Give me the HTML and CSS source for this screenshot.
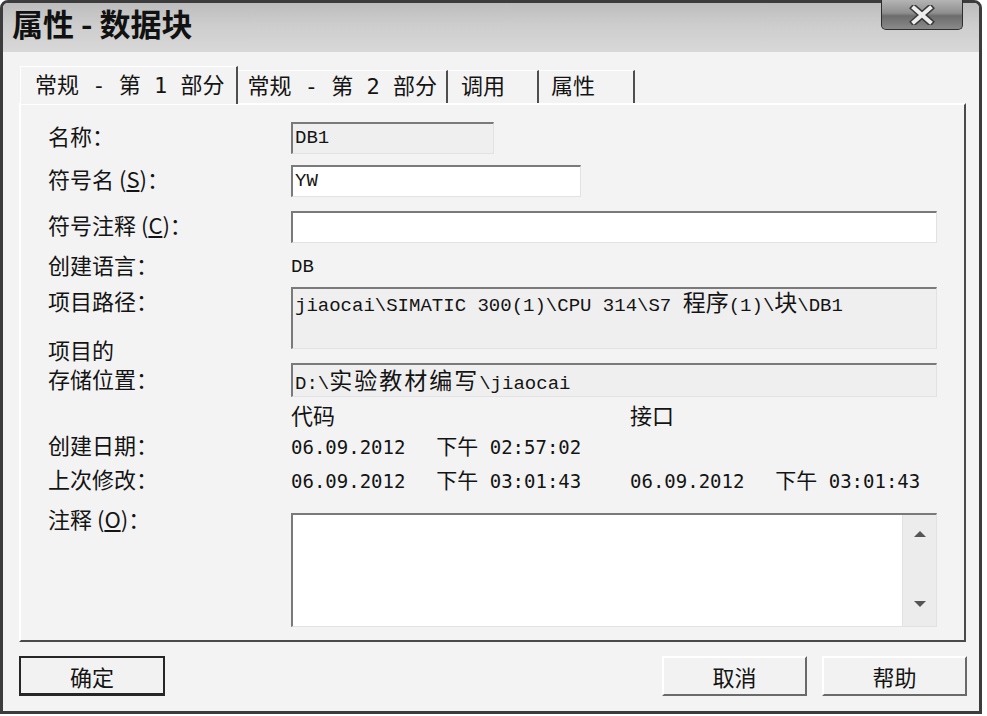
FILE: index.html
```html
<!DOCTYPE html>
<html lang="zh-CN">
<head>
  <meta charset="UTF-8">
  <title>属性 - 数据块</title>
  <link rel="stylesheet" href="styles.css">
</head>
<body>

<div class="window">
  <!-- 标题栏 -->
  <div class="titlebar">
    <span class="title">属性 - 数据块</span>
    <div class="close-btn">
      <svg width="26" height="20" viewBox="0 0 26 20">
        <path d="M5 3 L21 17 M21 3 L5 17" stroke="#3a3a3a" stroke-width="7" stroke-linecap="square" fill="none"/>
        <path d="M5 3 L21 17 M21 3 L5 17" stroke="#ededed" stroke-width="4" stroke-linecap="square" fill="none"/>
      </svg>
    </div>
  </div>

  <div class="client">
    <!-- 选项卡 -->
    <div class="tabs">
      <div class="tab active">常规 - 第 1 部分</div>
      <div class="tab">常规 - 第 2 部分</div>
      <div class="tab">调用</div>
      <div class="tab">属性</div>
    </div>

    <div class="panel">
      <div class="row">
        <span class="lbl">名称：</span>
        <div class="field readonly w-short">DB1</div>
      </div>
      <div class="row r-sym">
        <span class="lbl">符号名 (<u>S</u>)：</span>
        <div class="field w-mid">YW</div>
      </div>
      <div class="row r-comment">
        <span class="lbl">符号注释 (<u>C</u>)：</span>
        <div class="field w-full"></div>
      </div>
      <div class="row r-lang">
        <span class="lbl">创建语言：</span>
        <span class="mono">DB</span>
      </div>
      <div class="row r-path">
        <span class="lbl lbl-top">项目路径：</span>
        <div class="field readonly w-full tall">jiaocai\SIMATIC 300(1)\CPU 314\S7 <span class="cjk">程序</span>(1)\<span class="cjk">块</span>\DB1</div>
      </div>
      <div class="row r-store">
        <span class="lbl lbl-two">项目的<br>存储位置：</span>
        <div class="field readonly w-full">D:\<span class="cjk wide">实验教材编写</span>\jiaocai</div>
      </div>
      <div class="row r-head">
        <span class="lbl"></span>
        <span class="col">代码</span>
        <span class="col">接口</span>
      </div>
      <div class="row r-date">
        <span class="lbl">创建日期：</span>
        <span class="col date">06.09.2012  <span class="cjk-t">下午</span> 02:57:02</span>
      </div>
      <div class="row r-date2">
        <span class="lbl">上次修改：</span>
        <span class="col date">06.09.2012  <span class="cjk-t">下午</span> 03:01:43</span>
        <span class="col date">06.09.2012  <span class="cjk-t">下午</span> 03:01:43</span>
      </div>
      <div class="row r-memo">
        <span class="lbl lbl-memo">注释 (<u>O</u>)：</span>
        <div class="memo">
          <div class="memo-text"></div>
          <div class="scrollbar">
            <span class="arrow-up"></span>
            <span class="arrow-down"></span>
          </div>
        </div>
      </div>
    </div>

    <!-- 按钮 -->
    <div class="footer">
      <button class="btn default">确定</button>
      <button class="btn cancel">取消</button>
      <button class="btn">帮助</button>
    </div>
  </div>
</div>

</body>
</html>
```

FILE: styles.css
```css
body {
  margin: 0;
  background: #ffffff;
  font-family: "Noto Sans CJK SC", sans-serif;
  color: #141414;
}

.window {
  width: 982px;
  height: 714px;
  box-sizing: border-box;
  border: 3px solid #3c3c3c;
  border-radius: 8px 8px 0 0;
  background: #f3f3f3;
  display: flex;
  flex-direction: column;
}

/* 标题栏 */
.titlebar {
  height: 49px;
  display: flex;
  justify-content: space-between;
  align-items: flex-start;
  background: linear-gradient(#bdbdbd, #cdcdcd 45%, #d8d8d8);
  border-radius: 5px 5px 0 0;
}

.title {
  margin-left: 9px;
  line-height: 40px;
  font-size: 31px;
  font-weight: bold;
  color: #111;
}

.close-btn {
  width: 82px;
  height: 30px;
  margin-top: -3px;
  margin-right: 16px;
  box-sizing: border-box;
  border: 1px solid #2e2e2e;
  border-top: none;
  border-radius: 0 0 5px 5px;
  background: linear-gradient(#b4b4b4, #8e8e8e 45%, #6c6c6c 55%, #8a8a8a);
  display: flex;
  align-items: center;
  justify-content: center;
}

.client {
  flex: 1;
  padding: 14px 13px 15px 16px;
  display: flex;
  flex-direction: column;
}

/* 选项卡 */
.tabs {
  display: flex;
  align-items: flex-end;
  height: 38px;
  padding-left: 1px;
  margin-bottom: -1px;
}

.tab {
  height: 33px;
  line-height: 32px;
  padding: 0 9px 0 9px;
  min-width: 66px;
  font-size: 22px;
  font-family: "DejaVu Sans Mono", "Noto Sans CJK SC", monospace;
  white-space: pre;
  border-top: 1px solid #ffffff;
  border-right: 2px solid #4e4e4e;
  box-sizing: content-box;
  background: #f3f3f3;
}

.tab:nth-child(3) {
  padding-left: 13px;
  min-width: 67px;
}

.tab:nth-child(4) {
  padding-left: 12px;
  min-width: 73px;
}

.tab.active {
  height: 37px;
  line-height: 37px;
  padding: 0 12px 0 14px;
  border-left: 1px solid #ffffff;
  position: relative;
  z-index: 1;
}

.panel {
  border: 2px solid;
  border-color: #ffffff #4a4a4a #4a4a4a #ffffff;
  padding: 17px 27px 13px 27px;
}

.row {
  display: flex;
  align-items: center;
}

.lbl {
  width: 243px;
  flex-shrink: 0;
  font-size: 22px;
  line-height: 24px;
  padding-bottom: 6px;
  white-space: nowrap;
}

.lbl u {
  text-underline-offset: 2px;
}

.field {
  box-sizing: border-box;
  height: 32px;
  border-style: solid;
  border-width: 2px 1px 1px 2px;
  border-color: #7a7a7a #e2e2e2 #e2e2e2 #7a7a7a;
  background: #ffffff;
  padding-left: 2px;
  font-family: "Liberation Mono", "Noto Sans CJK SC", monospace;
  font-size: 19px;
  line-height: 28px;
  white-space: pre;
}

.field.readonly {
  background: #efefef;
}

.w-short { width: 203px; }
.w-mid { width: 290px; }
.w-full { width: 646px; }

.cjk {
  font-family: "Noto Sans CJK SC", sans-serif;
  font-size: 23px;
}

.cjk.wide {
  letter-spacing: 2px;
}

.mono {
  font-family: "Liberation Mono", monospace;
  font-size: 19px;
}

.r-sym { margin-top: 11px; }
.r-comment { margin-top: 14px; }
.r-lang { margin-top: 12px; height: 24px; }

.r-path {
  margin-top: 8px;
  align-items: flex-start;
}

.lbl-top {
  line-height: 26px;
  padding-bottom: 0;
}

.field.tall {
  height: 62px;
  line-height: 24px;
  padding-top: 0;
}

.r-store {
  margin-top: 14px;
  align-items: flex-start;
}

.r-store .field {
  height: 34px;
  line-height: 28px;
}

.lbl-two {
  line-height: 29px;
  padding-bottom: 0;
  margin-top: -28px;
}

.r-head { margin-top: 7px; height: 24px; }
.r-date { margin-top: 7px; height: 24px; }
.r-date2 { margin-top: 10px; height: 24px; }

.col {
  width: 339px;
  flex-shrink: 0;
  font-size: 22px;
  line-height: 24px;
  padding-bottom: 4px;
}

.col + .col {
  width: auto;
}

.date {
  font-family: "DejaVu Sans Mono", "Noto Sans CJK SC", monospace;
  font-size: 19px;
  white-space: pre;
  padding-bottom: 2px;
}

.cjk-t {
  font-family: "Noto Sans CJK SC", sans-serif;
  font-size: 21px;
  margin-left: 8px;
}

.r-memo {
  margin-top: 20px;
  align-items: flex-start;
}

.lbl-memo {
  margin-top: -7px;
  padding-bottom: 0;
}

.memo {
  width: 646px;
  height: 114px;
  box-sizing: border-box;
  display: flex;
  border-style: solid;
  border-width: 2px 1px 1px 2px;
  border-color: #7a7a7a #e2e2e2 #e2e2e2 #7a7a7a;
  background: #ffffff;
}

.memo-text {
  flex: 1;
}

.scrollbar {
  width: 33px;
  background: #ececec;
  border-left: 1px solid #e2e2e2;
  display: flex;
  flex-direction: column;
  justify-content: space-between;
  align-items: center;
  padding: 16px 0 19px;
}

.arrow-up {
  width: 0;
  height: 0;
  border-left: 6px solid transparent;
  border-right: 6px solid transparent;
  border-bottom: 6px solid #555;
}

.arrow-down {
  width: 0;
  height: 0;
  border-left: 6px solid transparent;
  border-right: 6px solid transparent;
  border-top: 6px solid #555;
}

/* 按钮 */
.footer {
  display: flex;
  margin-top: 14px;
  margin-right: -1px;
  gap: 15px;
}

.btn {
  width: 145px;
  height: 40px;
  box-sizing: border-box;
  background: #f2f2f2;
  border: 2px solid;
  border-color: #ffffff #6a6a6a #6a6a6a #ffffff;
  font-family: "Noto Sans CJK SC", sans-serif;
  font-size: 22px;
  color: #141414;
  padding: 0;
}

.btn.default {
  width: 146px;
  border-color: #262626;
  border-bottom-width: 3px;
}

.btn.cancel {
  margin-left: auto;
}
```
